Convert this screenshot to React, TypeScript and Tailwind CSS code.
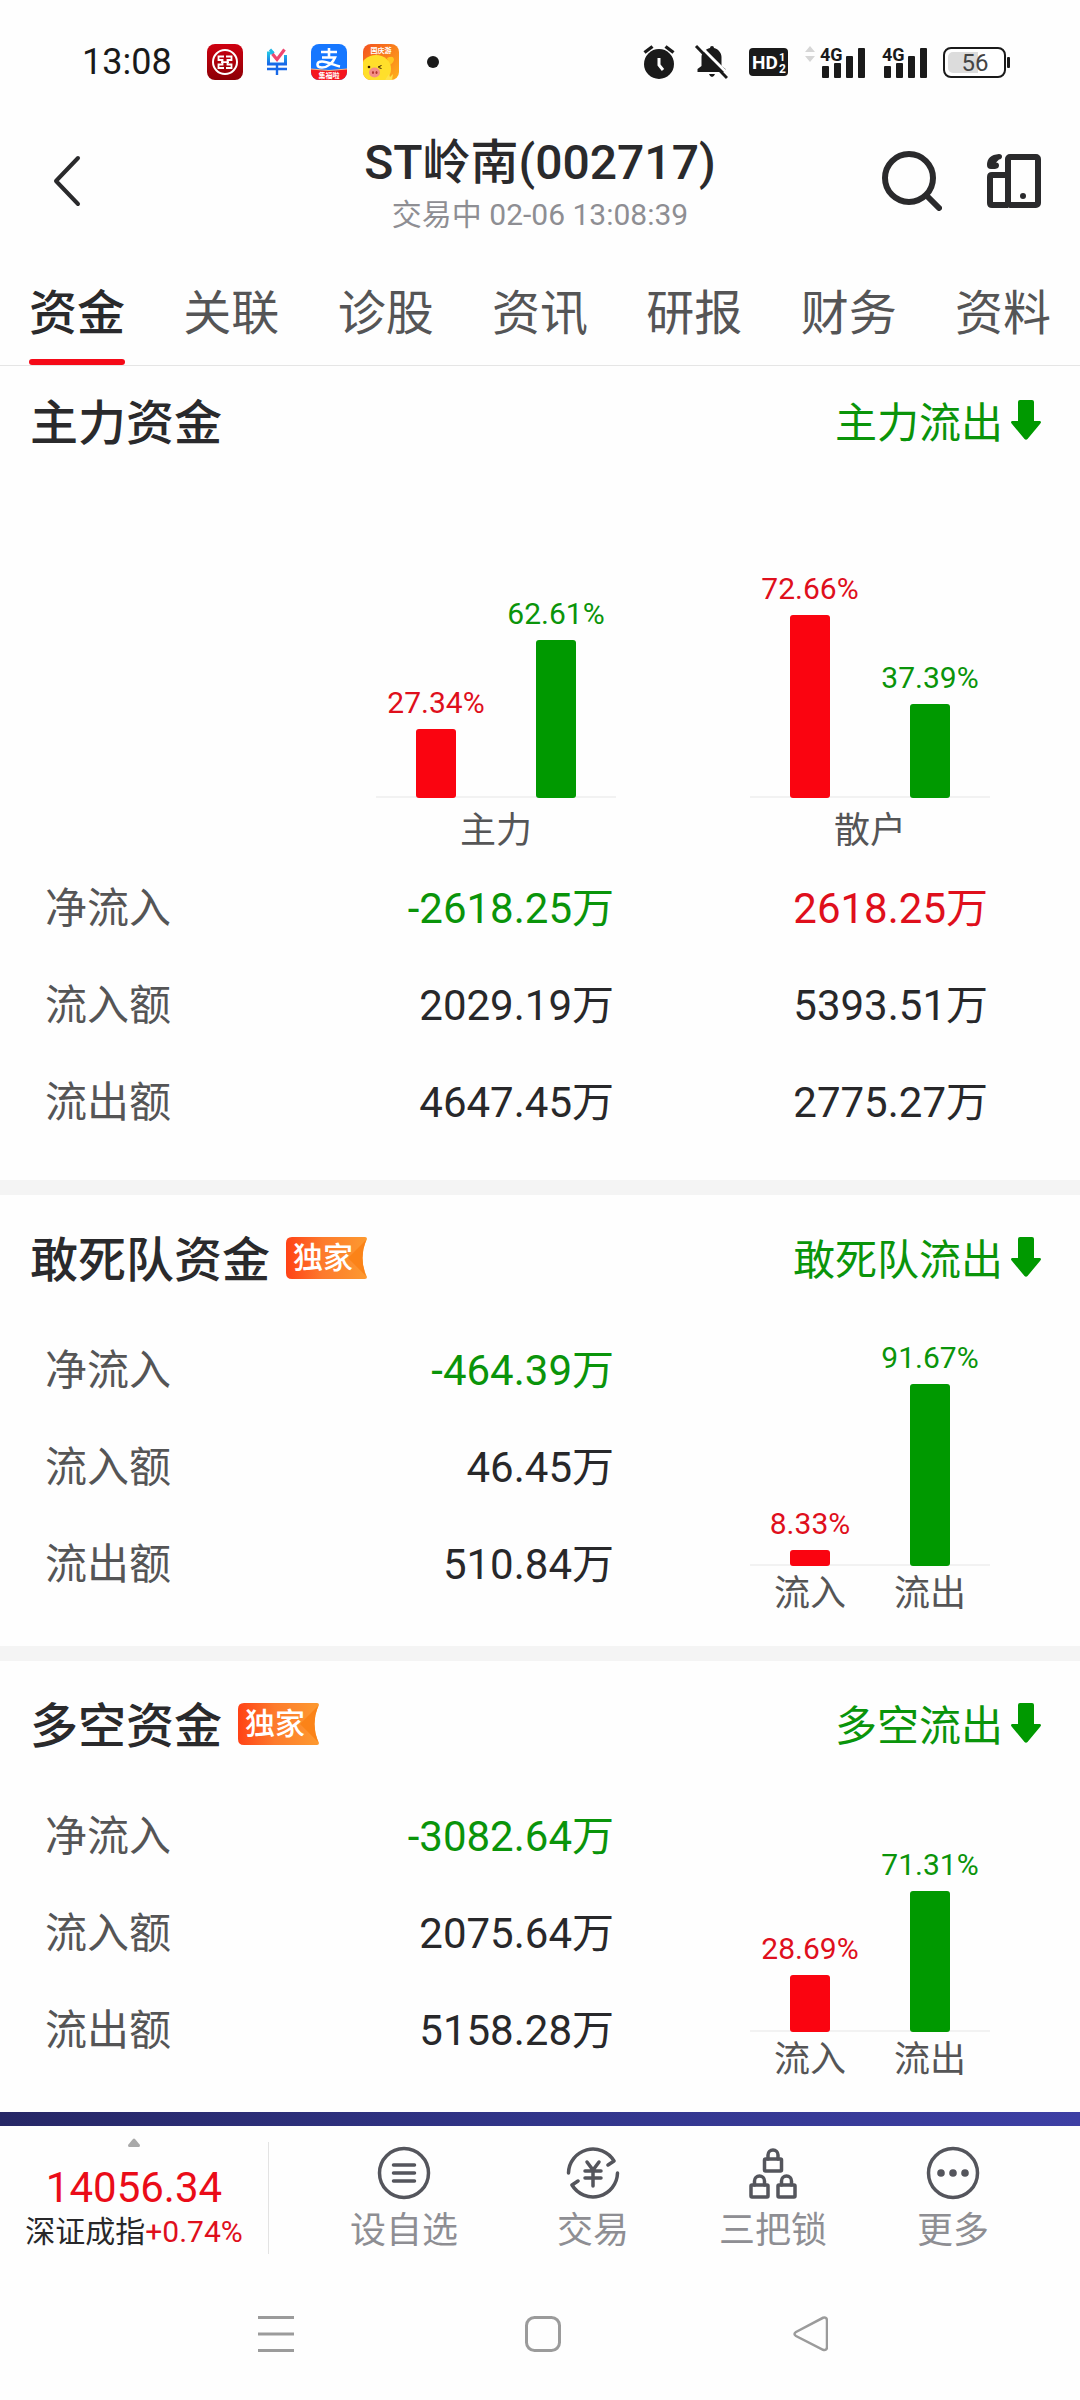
import { useState } from "react";
import type { ReactNode } from "react";

type Tone = "up" | "down" | "plain";

interface Bar {
  percent: number;
  tone: "up" | "down";
  label?: string;
}

interface FundRow {
  label: string;
  values: { text: string; tone: Tone }[];
}

const toneText: Record<Tone, string> = {
  up: "text-[#df0f1c]",
  down: "text-[#0a940a]",
  plain: "text-[#28282a]",
};

const toneBar = {
  up: "bg-[#fa0410]",
  down: "bg-[#009900]",
};

const tabs = ["资金", "关联", "诊股", "资讯", "研报", "财务", "资料"];

const mainRows: FundRow[] = [
  { label: "净流入", values: [{ text: "-2618.25万", tone: "down" }, { text: "2618.25万", tone: "up" }] },
  { label: "流入额", values: [{ text: "2029.19万", tone: "plain" }, { text: "5393.51万", tone: "plain" }] },
  { label: "流出额", values: [{ text: "4647.45万", tone: "plain" }, { text: "2775.27万", tone: "plain" }] },
];

const sections: { title: string; flow: string; rows: FundRow[]; bars: Bar[] }[] = [
  {
    title: "敢死队资金",
    flow: "敢死队流出",
    rows: [
      { label: "净流入", values: [{ text: "-464.39万", tone: "down" }] },
      { label: "流入额", values: [{ text: "46.45万", tone: "plain" }] },
      { label: "流出额", values: [{ text: "510.84万", tone: "plain" }] },
    ],
    bars: [
      { percent: 8.33, tone: "up", label: "流入" },
      { percent: 91.67, tone: "down", label: "流出" },
    ],
  },
  {
    title: "多空资金",
    flow: "多空流出",
    rows: [
      { label: "净流入", values: [{ text: "-3082.64万", tone: "down" }] },
      { label: "流入额", values: [{ text: "2075.64万", tone: "plain" }] },
      { label: "流出额", values: [{ text: "5158.28万", tone: "plain" }] },
    ],
    bars: [
      { percent: 28.69, tone: "up", label: "流入" },
      { percent: 71.31, tone: "down", label: "流出" },
    ],
  },
];

function Signal({ arrows = false }: { arrows?: boolean }) {
  return (
    <svg width={arrows ? 61 : 46} height="36" viewBox={arrows ? "-15 0 61 36" : "0 0 46 36"} fill="#1a1a1a">
      {arrows && <path d="M-14 8l5-6 5 6zM-14 12l5 6 5-6z" fill="#d6d6d6" />}
      <text x="1" y="17" fontSize="18" fontWeight="700" fontFamily="Roboto, sans-serif">
        4G
      </text>
      <rect x="3" y="22" width="7" height="12" rx="1" />
      <rect x="15" y="19" width="7" height="15" rx="1" />
      <rect x="27" y="12" width="7" height="22" rx="1" />
      <rect x="39" y="4" width="7" height="30" rx="1" />
    </svg>
  );
}

function StatusBar() {
  return (
    <div className="flex h-[124px] items-center justify-between pr-[70px] pl-[82px]">
      <div className="flex items-center gap-4">
        <span className="w-[109px] text-[36px] leading-[36px] text-[#1a1a1a]">13:08</span>
        <svg width="36" height="36" viewBox="0 0 36 36">
          <defs>
            <linearGradient id="bank" x1="0" y1="0" x2="0" y2="1">
              <stop offset="0" stopColor="#cf0010" />
              <stop offset="1" stopColor="#8c0006" />
            </linearGradient>
          </defs>
          <rect width="36" height="36" rx="8" fill="url(#bank)" />
          <circle cx="18" cy="18" r="12" fill="none" stroke="#fff" strokeWidth="2" />
          <path
            d="M17 12.500H11.500V16H15.500V20.500H11.500V24H17M19 12.500h5.500V16H20.500V20.500h4V24H19M14 18.200h8"
            fill="none"
            stroke="#fff"
            strokeWidth="1.800"
          />
        </svg>
        <svg width="36" height="36" viewBox="0 0 36 36" fill="none">
          <defs>
            <linearGradient id="dan" x1="0" y1="0" x2="0" y2="1">
              <stop offset="0" stopColor="#22c3e6" />
              <stop offset="1" stopColor="#1768e8" />
            </linearGradient>
          </defs>
          <path d="M15 9H9.500v11h17v-9" stroke="url(#dan)" strokeWidth="3" />
          <path d="M11 5.500l3.500 4" stroke="#22b8e6" strokeWidth="3" />
          <path d="M13.500 10l4.500 5.500L25.500 5.500" stroke="#ef476f" strokeWidth="3.200" />
          <path d="M8 25h20M18 20v11" stroke="#1768e8" strokeWidth="2.400" />
        </svg>
        <svg width="36" height="36" viewBox="0 0 36 36">
          <defs>
            <clipPath id="payClip">
              <rect width="36" height="36" rx="8" />
            </clipPath>
          </defs>
          <g clipPath="url(#payClip)">
            <rect width="36" height="36" fill="#1677ff" />
            <path
              d="M10 8h16M18 4v9M11 13.500h13c-2 5-7 10-13 10-6 0-6-6 0-6 6 0 12 4 18 5"
              fill="none"
              stroke="#fff"
              strokeWidth="2.600"
            />
            <path d="M0 25q18 3 36 0v11H0z" fill="#f5141e" />
            <path d="M0 25q18 3 36 0" fill="none" stroke="#ffb37a" strokeWidth="1" />
            <text x="18" y="34" fontSize="7" fontWeight="700" fill="#fff" textAnchor="middle">
              集福啦
            </text>
          </g>
        </svg>
        <svg width="36" height="36" viewBox="0 0 36 36">
          <defs>
            <linearGradient id="pigBg" x1="0" y1="0" x2="1" y2="1">
              <stop offset="0" stopColor="#f4511e" />
              <stop offset="1" stopColor="#ffb21a" />
            </linearGradient>
            <clipPath id="pigClip">
              <rect width="36" height="36" rx="8" />
            </clipPath>
          </defs>
          <g clipPath="url(#pigClip)">
            <rect width="36" height="36" fill="url(#pigBg)" />
            <path d="M24 14q6-3 7 1 0 4-5 6zM0 17q3-4 6-2l-2 7z" fill="#ffc71f" />
            <ellipse cx="13" cy="25" rx="15" ry="14" fill="#ffdf2b" />
            <ellipse cx="11.500" cy="28.500" rx="5.500" ry="5" fill="#f58f86" />
            <ellipse cx="10" cy="28.500" rx="1" ry="1.500" fill="#b3372f" />
            <ellipse cx="13.500" cy="28.500" rx="1" ry="1.500" fill="#b3372f" />
            <circle cx="6" cy="23" r="1.300" fill="#3a1d00" />
            <path d="M15 23l3.500-1.500M15.500 23.500l3 1" stroke="#3a1d00" strokeWidth="1" />
            <path d="M22 36l4-6 1 3 3-3-1 6z" fill="#ffe24a" />
            <text x="18" y="9" fontSize="7" fontWeight="700" fill="#fff" textAnchor="middle">
              国庆游
            </text>
          </g>
        </svg>
        <span className="mx-3 size-3 rounded-full bg-[#1a1a1a]" />
      </div>

      <div className="flex items-center gap-4">
        <svg width="34" height="36" viewBox="0 0 34 36">
          <circle cx="17" cy="20" r="15" fill="#1a1a1a" />
          <path d="M2.500 8.500l8-6M31.500 8.500l-8-6" stroke="#1a1a1a" strokeWidth="3.400" />
          <path d="M17 14v7l4 5" fill="none" stroke="#fff" strokeWidth="3" />
        </svg>
        <svg width="36" height="36" viewBox="0 0 36 36">
          <path
            d="M18 4a2 2 0 0 1 4 0c4.500 1 7.500 5 7.500 9v9l4 3v3h-28v-3l4-3v-9c0-4 4-8 8.500-9z"
            fill="#1a1a1a"
          />
          <path d="M17 30h6q-1 3-3 3t-3-3z" fill="#1a1a1a" />
          <path d="M7 1l31 31" stroke="#fff" strokeWidth="3" />
          <path d="M4 2l31 32" stroke="#1a1a1a" strokeWidth="3" />
        </svg>
        <svg width="44" height="36" viewBox="0 0 44 36">
          <rect x="5" y="4" width="39" height="28" rx="4" fill="#1a1a1a" />
          <g fill="#fff" fontFamily="Roboto, sans-serif" fontWeight="700">
            <text x="8" y="25" fontSize="19">
              HD
            </text>
            <text x="35" y="17" fontSize="11">
              1
            </text>
            <text x="35" y="29" fontSize="12">
              2
            </text>
          </g>
        </svg>
        <Signal arrows />
        <Signal />
        <svg width="67" height="36" viewBox="0 0 67 36">
          <rect x="1" y="4" width="61" height="29" rx="7" fill="#fff" stroke="#1a1a1a" strokeWidth="2" />
          <path d="M10 8h25v21H10a5 5 0 0 1-5-5V13a5 5 0 0 1 5-5z" fill="#dcdcdc" />
          <rect x="64" y="13" width="3" height="11" rx="1" fill="#1a1a1a" />
          <text x="32" y="27" fontSize="24" fill="#444" textAnchor="middle" fontFamily="Roboto, sans-serif">
            56
          </text>
        </svg>
      </div>
    </div>
  );
}

function Header() {
  return (
    <header className="grid h-[118px] grid-cols-[1fr_auto_1fr] items-center px-[39px] pb-1">
      <button type="button" aria-label="返回" className="ml-[14px] justify-self-start">
        <svg width="28" height="52" viewBox="0 0 28 52" fill="none" stroke="#2a2a2c" strokeWidth="4">
          <path d="M25 3L3 26l22 23" strokeLinecap="round" strokeLinejoin="round" />
        </svg>
      </button>
      <div className="flex flex-col items-center gap-1.5 pt-1.5">
        <h1 className="text-[48px] leading-[56px] font-medium text-[#2a2a2c]">ST岭南(002717)</h1>
        <p className="text-[30px] leading-[36px] text-[#8e8e93]">交易中 02-06 13:08:39</p>
      </div>
      <div className="flex gap-[45px] justify-self-end">
        <button type="button" aria-label="搜索">
          <svg width="60" height="60" viewBox="0 0 60 60" fill="none" stroke="#2a2a2c" strokeWidth="6">
            <circle cx="27" cy="27" r="24" />
            <path d="M45 45l12 12" strokeLinecap="round" />
          </svg>
        </button>
        <button type="button" aria-label="陪伴">
          <svg width="54" height="60" viewBox="0 0 54 60" fill="none" stroke="#2a2a2c" strokeWidth="6">
            <rect x="21" y="6" width="30" height="48" rx="2" />
            <path d="M21 24H5q-2 0-2 2v26q0 2 2 2h16" />
            <path
              d="M12 3q3 0 3 2.500T12 8.500L9 11.500q3 0 3 3T8 18H4q-4 0-4-4Q0 4 12 3z"
              fill="#2a2a2c"
              stroke="none"
            />
            <circle cx="36" cy="45" r="3" fill="#2a2a2c" stroke="none" />
          </svg>
        </button>
      </div>
    </header>
  );
}

function TabBar() {
  const [active, setActive] = useState(tabs[0]);

  return (
    <nav className="flex justify-between border-b border-[#e5e5e5] px-[29px] pt-9">
      {tabs.map((tab) => (
        <button
          key={tab}
          type="button"
          onClick={() => setActive(tab)}
          className={
            tab === active
              ? "text-[48px] leading-[72px] font-medium text-[#2a2a2c]"
              : "text-[48px] leading-[72px] text-[#555556]"
          }
        >
          {tab}
          <span className={tab === active ? "mt-[9px] block h-1.5 rounded-full bg-[#f50a18]" : "mt-[9px] block h-1.5"} />
        </button>
      ))}
    </nav>
  );
}

function ExclusiveBadge() {
  return (
    <span className="relative mb-0.5 flex h-[42px] w-[81px] items-center pl-[7px]">
      <svg className="absolute inset-0" width="81" height="42" viewBox="0 0 81 42">
        <defs>
          <linearGradient id="badge" x1="0" y1="0" x2="1" y2="0">
            <stop offset="0" stopColor="#ff4216" />
            <stop offset="0.450" stopColor="#fd7a2c" />
            <stop offset="1" stopColor="#fd9a30" />
          </linearGradient>
        </defs>
        <path d="M6 0h73q2 0 2 2-9 19 0 38 0 2-2 2H6q-6 0-6-6V6q0-6 6-6z" fill="url(#badge)" />
        <path d="M80 3q-7 18 0 36L62 21z" fill="#fb8318" />
      </svg>
      <span className="relative text-[30px] leading-[42px] font-medium text-white">独家</span>
    </span>
  );
}

function SectionHeader({ title, flow, exclusive = false }: { title: string; flow: string; exclusive?: boolean }) {
  return (
    <div
      className={
        exclusive
          ? "flex h-[127px] items-center justify-between pr-[39px] pl-[30px]"
          : "flex h-28 items-center justify-between pr-[39px] pl-[30px]"
      }
    >
      <div className="flex items-center gap-4">
        <h2 className="pt-1 text-[48px] leading-[56px] font-medium text-[#2a2a2c]">{title}</h2>
        {exclusive && <ExclusiveBadge />}
      </div>
      <div className="flex items-center gap-2 text-[42px] leading-[56px] text-[#0a940a]">
        <span className="pt-1">{flow}</span>
        <svg width="30" height="40" viewBox="0 0 30 40" fill="#009900" className="mb-1">
          <path d="M9 0h12q2 0 2 2v19h6q2 1 0 3L16.500 39q-1.500 1.500-3 0L1 24q-2-2 0-3h6V2q0-2 2-2z" />
        </svg>
      </div>
    </div>
  );
}

// One pair of bars standing on a light base line, `unit` is pixels per percent
function BarPair({ bars, unit, caption }: { bars: Bar[]; unit: number; caption?: string }) {
  return (
    <div className="flex w-60 shrink-0 flex-col justify-end">
      <div className="grid grid-cols-2 items-end bg-[linear-gradient(#f2f2f2,#f2f2f2)] bg-[length:100%_2px] bg-bottom bg-no-repeat">
        {bars.map((bar) => (
          <div key={bar.tone} className="flex flex-col items-center gap-2">
            <span className={`text-[30px] leading-[36px] ${toneText[bar.tone]}`}>{bar.percent}%</span>
            <div
              className={`w-[40px] rounded-[3px] ${toneBar[bar.tone]}`}
              style={{ height: Math.round(bar.percent * unit) }}
            />
          </div>
        ))}
      </div>
      {caption ? (
        <p className="pt-1 text-center text-[36px] leading-[58px] text-[#555556]">{caption}</p>
      ) : (
        <div className="grid grid-cols-2 pt-1 text-center text-[36px] leading-[48px] text-[#555556]">
          {bars.map((bar) => (
            <span key={bar.tone}>{bar.label}</span>
          ))}
        </div>
      )}
    </div>
  );
}

function FundTable({ rows }: { rows: FundRow[] }) {
  return (
    <table className="w-full text-[42px] leading-[97px]">
      <tbody>
        {rows.map((row) => (
          <tr key={row.label}>
            <th scope="row" className="p-0 text-left font-normal text-[#555556]">
              {row.label}
            </th>
            {row.values.map((value, i) => (
              <td key={i} className={`py-0 pr-0.5 pl-0 text-right ${i > 0 ? "w-[374px]" : ""} ${toneText[value.tone]}`}>
                {value.text}
              </td>
            ))}
          </tr>
        ))}
      </tbody>
    </table>
  );
}

function IndexTicker() {
  return (
    <button type="button" className="flex w-[269px] shrink-0 flex-col items-center border-r border-[#e3e3e3]">
      <svg width="12" height="9" viewBox="0 0 12 9" fill="#a9a9a9" className="-mt-1">
        <path d="M5 1q1-1 2 0l5 6q0 2-1 2H1Q0 9 0 7z" />
      </svg>
      <span className="mt-4 text-[42px] leading-[50px] text-[#ea0c18]">14056.34</span>
      <span className="text-[30px] leading-[38px] whitespace-nowrap text-[#28282a]">
        深证成指<span className="text-[#df0f1c]">+0.74%</span>
      </span>
    </button>
  );
}

function ToolButton({ label, className, children }: { label: string; className: string; children: ReactNode }) {
  return (
    <button
      type="button"
      className={`flex flex-col items-center gap-2 text-[36px] leading-[46px] text-[#8e8e93] ${className}`}
    >
      <svg width="54" height="54" viewBox="0 0 54 54" fill="none" stroke="#54555c" strokeWidth="3.500" strokeLinecap="round">
        {children}
      </svg>
      {label}
    </button>
  );
}

function Lock({ x, y }: { x: number; y: number }) {
  return (
    <g transform={`translate(${x} ${y})`}>
      <rect x="0" y="10" width="17" height="12" rx="1" />
      <path d="M3.500 10V6a5 5 0 0 1 10 0v4" />
    </g>
  );
}

function ToolBar() {
  return (
    <footer className="flex pt-4 pb-[38px]">
      <IndexTicker />
      <div className="flex flex-1 pt-1 pr-[37px] pl-9">
        <ToolButton label="设自选" className="flex-[11]">
          <circle cx="27" cy="27" r="24.500" />
          <path d="M16.500 19h21M16.500 27h21M16.500 35h21" />
        </ToolButton>
        <ToolButton label="交易" className="flex-[10]">
          <path d="M2.500 27A24.500 24.500 0 0 1 48 15l-6 4" strokeLinejoin="round" />
          <path d="M51.500 27A24.500 24.500 0 0 1 6 39l6-4" strokeLinejoin="round" />
          <path d="M21 16l6 8 6-8M19 25h16M19 32h16M27 24v16" />
        </ToolButton>
        <ToolButton label="三把锁" className="flex-[10]">
          <Lock x={18.5} y={3} />
          <Lock x={5} y={29} />
          <Lock x={32} y={29} />
        </ToolButton>
        <ToolButton label="更多" className="flex-[10]">
          <circle cx="27" cy="27" r="24.500" />
          <g fill="#54555c" stroke="none">
            <circle cx="15" cy="27" r="3.800" />
            <circle cx="27" cy="27" r="3.800" />
            <circle cx="39" cy="27" r="3.800" />
          </g>
        </ToolButton>
      </div>
    </footer>
  );
}

function SystemNav() {
  return (
    <div className="grid grid-cols-3 justify-items-center pt-6 pr-[137px] pb-12 pl-[143px]">
      <button type="button" aria-label="最近任务">
        <svg width="36" height="36" viewBox="0 0 36 36" stroke="#9b9b9b" strokeWidth="3">
          <path d="M0 1.500h36M0 18h36M0 34.500h36" />
        </svg>
      </button>
      <button type="button" aria-label="主屏幕">
        <svg width="36" height="36" viewBox="0 0 36 36" fill="none" stroke="#9b9b9b" strokeWidth="3">
          <rect x="1.500" y="1.500" width="33" height="33" rx="8" />
        </svg>
      </button>
      <button type="button" aria-label="返回上一级">
        <svg width="36" height="36" viewBox="0 0 36 36" fill="none" stroke="#9b9b9b" strokeWidth="2.500">
          <path d="M31 1.800q4-1 4 3v26q0 4-4 3L4 20q-3-2 0-4z" />
        </svg>
      </button>
    </div>
  );
}

export default function App() {
  return (
    <div className="min-h-screen bg-[#fefefe] font-[Roboto,'Noto_Sans_CJK_SC',sans-serif]">
      <StatusBar />
      <Header />
      <TabBar />

      <main>
        <section className="pb-[29px]">
          <SectionHeader title="主力资金" flow="主力流出" />
          <div className="pr-[90px] pl-[45px]">
            <div className="flex h-[382px] justify-end gap-[134px]">
              <BarPair
                unit={2.52}
                caption="主力"
                bars={[
                  { percent: 27.34, tone: "up" },
                  { percent: 62.61, tone: "down" },
                ]}
              />
              <BarPair
                unit={2.52}
                caption="散户"
                bars={[
                  { percent: 72.66, tone: "up" },
                  { percent: 37.39, tone: "down" },
                ]}
              />
            </div>
            <FundTable rows={mainRows} />
          </div>
        </section>

        {sections.map((section) => (
          <section key={section.title} className="border-t-[15px] border-[#f4f4f4] pb-7">
            <SectionHeader title={section.title} flow={section.flow} exclusive />
            <div className="flex h-[296px] gap-[134px] pr-[90px] pl-[45px]">
              <div className="flex-1">
                <FundTable rows={section.rows} />
              </div>
              <BarPair bars={section.bars} unit={1.98} />
            </div>
          </section>
        ))}

        {/* Top edge of the promo banner */}
        <div className="h-[14px] bg-linear-to-r from-[#262766] via-[#31358a] to-[#3d3fa4]" />
      </main>

      <ToolBar />
      <SystemNav />
    </div>
  );
}
